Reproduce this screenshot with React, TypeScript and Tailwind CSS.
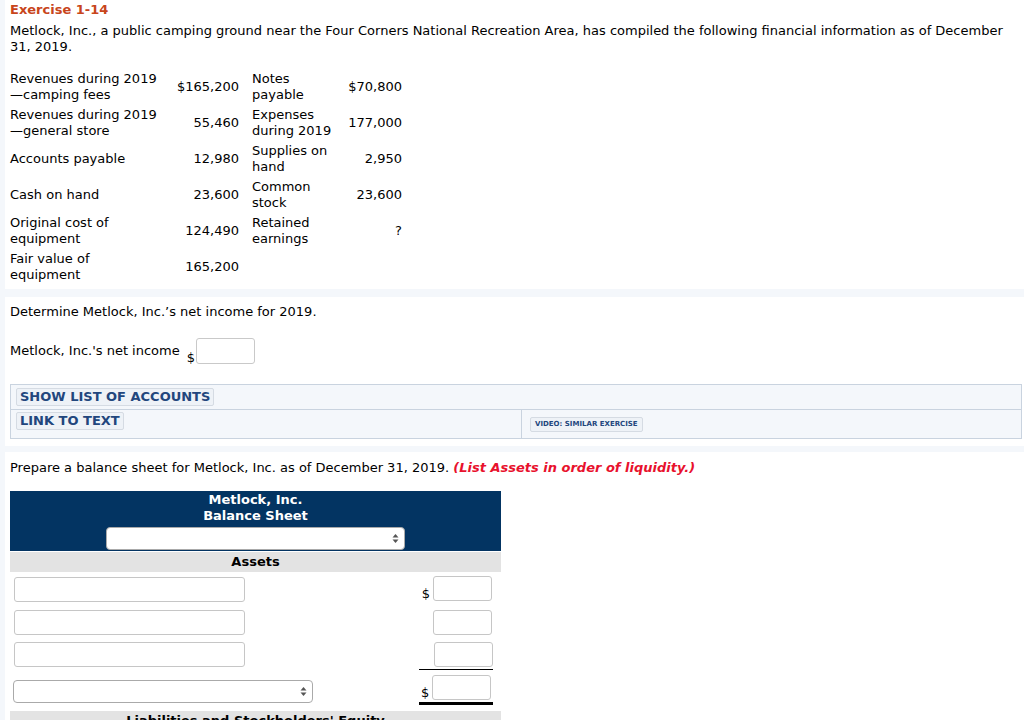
const rows = [
  ["Revenues during 2019 —camping fees", "$165,200", "Notes payable", "$70,800"],
  ["Revenues during 2019 —general store", "55,460", "Expenses during 2019", "177,000"],
  ["Accounts payable", "12,980", "Supplies on hand", "2,950"],
  ["Cash on hand", "23,600", "Common stock", "23,600"],
  ["Original cost of equipment", "124,490", "Retained earnings", "?"],
  ["Fair value of equipment", "165,200", "", ""],
];

const SelectArrows = () => (
  <svg width="7" height="11" viewBox="0 0 7 11" className="text-[#555]">
    <path d="M3.5 1 L6.5 4.5 H0.5 Z" fill="currentColor" />
    <path d="M3.5 10 L6.5 6.5 H0.5 Z" fill="currentColor" />
  </svg>
);

const App = () => {
  return (
    <div className="min-h-screen bg-[#f4f7fb] pl-[5px] font-['DejaVu_Sans',Verdana,sans-serif] text-[13px] leading-[16px] text-black">
      {/* question */}
      <section className="bg-white pl-[5px] pr-4 pt-[2px] h-[289px]">
        <h1 className="font-bold text-[#c8451b]">Exercise 1-14</h1>
        <p className="mt-[5px]">
          Metlock, Inc., a public camping ground near the Four Corners National Recreation Area, has compiled the
          following financial information as of December 31, 2019.
        </p>
        <table className="mt-[14px] border-collapse">
          <tbody>
            {rows.map((r, i) => (
              <tr key={i} className="h-[36px]">
                <td className="w-[160px] pr-2 align-middle">{r[0]}</td>
                <td className="w-[69px] text-right align-middle">{r[1]}</td>
                <td className="w-[97px] pl-[13px] align-middle">{r[2]}</td>
                <td className="w-[66px] text-right align-middle">{r[3]}</td>
              </tr>
            ))}
          </tbody>
        </table>
      </section>

      <section className="mt-[8px] bg-white pl-[5px] pr-[2px] pt-[7px] h-[149px]">
        <p>Determine Metlock, Inc.’s net income for 2019.</p>
        <div className="mt-[17px] flex items-start">
          <span className="mt-[6px]">Metlock, Inc.'s net income</span>
          <span className="ml-[7px] mt-[13px]">$</span>
          <div className="ml-[1px] mt-[1px] h-[26px] w-[59px] rounded-[3px] border border-[#c9c9c9] bg-white" />
        </div>
        <div className="mt-[18px] border border-[#c9d3df] bg-[#f4f7fb]">
          <div className="h-[25px] border-b border-[#c9d3df] pl-[5px] pt-[3px]">
            <span className="inline-block rounded-[2px] border border-[#d5dbe3] bg-[#eef2f7] px-[3px] text-[13px] font-bold leading-[16px] text-[#22467d]">
              SHOW LIST OF ACCOUNTS
            </span>
          </div>
          <div className="flex h-[28px]">
            <div className="w-[511px] border-r border-[#c9d3df] pl-[5px] pt-[2px]">
              <span className="inline-block rounded-[2px] border border-[#d5dbe3] bg-[#eef2f7] px-[3px] text-[13px] font-bold leading-[16px] text-[#22467d]">
                LINK TO TEXT
              </span>
            </div>
            <div className="pl-[8px] pt-[4px]">
              <span className="inline-block rounded-[2px] border border-[#d5dbe3] bg-[#eef2f7] px-[4px] text-[7px] font-bold leading-[13px] text-[#22467d]">
                VIDEO: SIMILAR EXERCISE
              </span>
            </div>
          </div>
        </div>
      </section>

      {/* balance sheet */}
      <section className="mt-[6px] bg-white pl-[5px] pt-[8px] pb-10">
        <p>
          Prepare a balance sheet for Metlock, Inc. as of December 31, 2019.{" "}
          <span className="font-bold italic text-[#e8112d]">(List Assets in order of liquidity.)</span>
        </p>
        <div className="mt-[15px] w-[491px]">
          <div className="bg-[#033462] pt-[1px] pb-[1px] text-center font-bold text-white">
            <div>Metlock, Inc.</div>
            <div>Balance Sheet</div>
            <div className="mx-auto mt-[3px] flex h-[23px] w-[299px] items-center justify-end rounded-[4px] border border-[#aaa] bg-white pr-[5px]">
              <SelectArrows />
            </div>
          </div>
          <div className="mt-[1px] h-[20px] bg-[#e3e3e3] pt-[2px] text-center font-bold">Assets</div>

          <div className="mt-[4px] flex items-start">
            <div className="ml-[4px] mt-[1px] h-[25px] w-[231px] rounded-[3px] border border-[#c6c6c6]" />
            <span className="ml-auto mt-[10px]">$</span>
            <div className="ml-[3px] mr-[9px] h-[25px] w-[59px] rounded-[3px] border border-[#c6c6c6]" />
          </div>
          <div className="mt-[8px] flex items-start">
            <div className="ml-[4px] h-[25px] w-[231px] rounded-[3px] border border-[#c6c6c6]" />
            <div className="ml-auto mr-[9px] h-[25px] w-[59px] rounded-[3px] border border-[#c6c6c6]" />
          </div>
          <div className="mt-[7px] flex items-start">
            <div className="ml-[4px] h-[25px] w-[231px] rounded-[3px] border border-[#c6c6c6]" />
            <div className="ml-auto mr-[8px] w-[74px] border-b border-black pb-[2px] pl-[15px]">
              <div className="h-[25px] w-[59px] rounded-[3px] border border-[#c6c6c6]" />
            </div>
          </div>
          <div className="mt-[5px] flex items-start">
            <div className="ml-[3px] mt-[5px] flex h-[23px] w-[300px] items-center justify-end rounded-[4px] border border-[#aaa] bg-white pr-[5px]">
              <SelectArrows />
            </div>
            <div className="ml-auto mr-[8px] flex w-[74px] items-start border-b-[3px] border-black pb-[1px] pl-[2px]">
              <span className="mt-[10px]">$</span>
              <div className="ml-[3px] h-[25px] w-[59px] rounded-[3px] border border-[#c6c6c6]" />
            </div>
          </div>
          <div className="mt-[6px] h-[20px] bg-[#e3e3e3] pt-[2px] text-center font-bold">
            Liabilities and Stockholders' Equity
          </div>
        </div>
      </section>
    </div>
  );
};

export default App;
